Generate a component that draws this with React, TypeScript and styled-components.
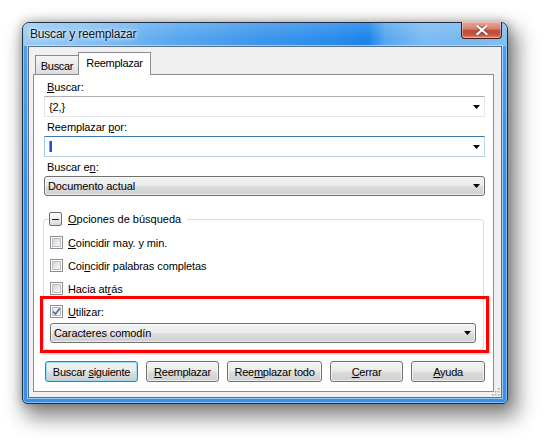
import React from "react";
import styled, { createGlobalStyle } from "styled-components";

const Global = createGlobalStyle`
  html, body { margin: 0; padding: 0; background: #ffffff; }
  body {
    font-family: "Liberation Sans", Arial, sans-serif;
    font-size: 11px;
    letter-spacing: -0.1px;
    color: #000;
  }
  * { box-sizing: border-box; }
`;

const Stage = styled.div`
  width: 550px;
  height: 447px;
  padding: 22px 0 0 22px;
`;

const Window = styled.div`
  position: relative;
  width: 486px;
  height: 382px;
  border: 1px solid #1d3044;
  border-radius: 7px 7px 5px 5px;
  background: linear-gradient(180deg, #4fa2ee 0%, #3a92e8 40%, #3990e6 100%);
  box-shadow:
    inset 0 0 0 1px rgba(200, 230, 255, 0.55),
    6px 10px 20px 4px rgba(0, 0, 0, 0.45),
    0 0 10px 1px rgba(0, 0, 0, 0.22);
  display: flex;
  flex-direction: column;
`;

const TitleBar = styled.div`
  height: 23px;
  flex: none;
  display: flex;
  align-items: flex-start;
  justify-content: space-between;
  border-radius: 6px 6px 0 0;
  background:
    linear-gradient(180deg, rgba(255, 255, 255, 0.15) 0%, rgba(255, 255, 255, 0) 70%),
    linear-gradient(
      90deg,
      #9ccbf4 0px,
      #84bff2 70px,
      #5ba8ef 150px,
      #3c96ec 240px,
      #2a8ceb 310px,
      #1b84ea 345px,
      #56a7ef 362px,
      #7cbbf2 400px,
      #77b7f1 450px,
      #83bff2 484px
    );
`;

const Title = styled.div`
  padding-left: 7px;
  line-height: 23px;
  font-size: 12px;
  letter-spacing: -0.2px;
  color: #0c1620;
  text-shadow: 0 0 6px rgba(255, 255, 255, 0.95), 0 0 3px rgba(255, 255, 255, 0.9);
`;

const CloseButton = styled.div`
  width: 41px;
  height: 17px;
  margin: -1px 5px 0 0;
  border: 1px solid #4b1a14;
  border-top: none;
  border-radius: 0 0 4px 4px;
  background: linear-gradient(
    180deg,
    #e6a497 0%,
    #d88575 40%,
    #c24a35 55%,
    #c45540 80%,
    #dd8e78 100%
  );
  box-shadow: inset 0 0 0 1px rgba(255, 220, 210, 0.45);
  display: flex;
  align-items: center;
  justify-content: center;
`;

const Client = styled.div`
  position: relative;
  flex: 1;
  margin: 0 5px 5px 5px;
  border: 1px solid #5a7089;
  box-shadow: 0 0 0 1px rgba(220, 238, 255, 0.6);
  background: #f0f0f0;
  padding: 5px 7px 5px 4px;
  display: flex;
  flex-direction: column;
`;

const TabStrip = styled.div`
  display: flex;
  align-items: flex-end;
  height: 23px;
  padding-left: 2px;
  margin-bottom: -1px;
  position: relative;
  z-index: 1;
`;

const Tab = styled.div<{ $active?: boolean; $w: number }>`
  width: ${(p) => p.$w}px;
  height: ${(p) => (p.$active ? 23 : 19)}px;
  margin-bottom: ${(p) => (p.$active ? 0 : 1)}px;
  margin-left: ${(p) => (p.$active ? -1 : 0)}px;
  border: 1px solid #898c95;
  border-bottom: none;
  background: ${(p) =>
    p.$active ? "#ffffff" : "linear-gradient(180deg, #f4f4f4 0%, #e9e9e9 50%, #dcdcdc 100%)"};
  display: flex;
  align-items: center;
  justify-content: center;
  padding: ${(p) => (p.$active ? "0 0 3px" : "2px 0 0")};
  letter-spacing: -0.3px;
`;

const Panel = styled.div`
  position: relative;
  flex: 1;
  border: 1px solid #898c95;
  background: #ffffff;
  padding: 5px 8px 0 10px;
  display: flex;
  flex-direction: column;
`;

const Label = styled.div<{ $gap?: number }>`
  height: 14px;
  line-height: 14px;
  margin-top: ${(p) => p.$gap ?? 0}px;
  margin-bottom: 2px;
  padding-left: 3px;
`;

const Key = styled.span`
  text-decoration: underline;
  text-underline-offset: 1px;
`;

const Combo = styled.div<{ $focused?: boolean }>`
  height: 21px;
  border: 1px solid;
  border-color: ${(p) =>
    p.$focused ? "#3d7bad #b7d9ed #b5cfe7 #a4c9e3" : "#abadb3 #e3e9ef #e3e9ef #e2e3ea"};
  background: #ffffff;
  display: flex;
  align-items: center;
  justify-content: space-between;
  padding: 0 4px 0 4px;
`;

const Caret = styled.span`
  width: 3px;
  height: 11px;
  background: linear-gradient(90deg, #e98a2c 0 1px, #1b52c4 1px 3px);
`;

const Select = styled.div<{ $inset?: number }>`
  height: 20px;
  border: 1px solid #707070;
  border-radius: 3px;
  margin-left: ${(p) => p.$inset ?? 0}px;
  background: linear-gradient(180deg, #f3f3f3 0%, #ebebeb 48%, #dddddd 52%, #cfcfcf 100%);
  box-shadow: inset 0 0 0 1px rgba(255, 255, 255, 0.6);
  display: flex;
  align-items: center;
  justify-content: space-between;
  padding: 0 4px 0 3px;
`;

const Group = styled.fieldset`
  margin: 16px 1px 0 -1px;
  border: 1px solid #d5dfe5;
  border-radius: 3px;
  padding: 5px 7px 6px 5px;
  min-width: 0;
`;

const Legend = styled.legend`
  padding: 0 6px 0 0;
  height: 14px;
  display: flex;
  align-items: center;
  gap: 6px;
  line-height: 14px;
  letter-spacing: 0;
`;

const Toggle = styled.span`
  width: 13px;
  height: 14px;
  border: 1px solid #6e6e6e;
  border-radius: 2px;
  background: linear-gradient(180deg, #ffffff 0%, #f0f0f0 45%, #d9d9d9 100%);
  display: flex;
  align-items: center;
  justify-content: center;
  &::after {
    content: "";
    width: 7px;
    height: 1px;
    background: #1e1e1e;
  }
`;

const Row = styled.div`
  height: 23px;
  display: flex;
  align-items: center;
  gap: 5px;
  padding-left: 1px;
`;

const Box = styled.span<{ $checked?: boolean }>`
  position: relative;
  width: 13px;
  height: 13px;
  flex: none;
  border: 1px solid #8e8f8f;
  background: #ffffff;
  &::before {
    content: "";
    position: absolute;
    inset: 1px;
    border: 1px solid #b9bdc3;
    background: ${(p) =>
      p.$checked
        ? "linear-gradient(135deg, #e6e8ec 0%, #f7f8f9 100%)"
        : "linear-gradient(135deg, #cdd1d6 0%, #e9ebee 60%, #f7f7f7 100%)"};
  }
  svg {
    position: absolute;
    left: 1px;
    top: 1px;
  }
`;

const Buttons = styled.div`
  display: flex;
  gap: 8px;
  margin: 11px 0 0 1px;
`;

const Button = styled.div<{ $w: number; $default?: boolean }>`
  width: ${(p) => p.$w}px;
  height: 21px;
  border: 1px solid ${(p) => (p.$default ? "#3c7fb1" : "#707070")};
  border-radius: 3px;
  background: linear-gradient(180deg, #f2f2f2 0%, #ebebeb 48%, #dddddd 52%, #cfcfcf 100%);
  box-shadow: inset 0 0 0 1px ${(p) => (p.$default ? "#9cdcfa" : "rgba(255,255,255,0.65)")};
  display: flex;
  align-items: center;
  justify-content: center;
  letter-spacing: -0.25px;
  white-space: pre;
`;

const Highlight = styled.div`
  position: absolute;
  left: 6px;
  top: 221px;
  width: 449px;
  height: 57px;
  border: 3px solid #ff0000;
  box-shadow: 1px 1px 2px rgba(0, 0, 0, 0.25);
  pointer-events: none;
`;

const Grip = styled.svg`
  position: absolute;
  right: 1px;
  bottom: 1px;
`;

const Arrow = () => (
  <svg width="7" height="4" viewBox="0 0 7 4">
    <polygon points="0,0 7,0 3.5,4" fill="#000" />
  </svg>
);

const Check = () => (
  <svg width="9" height="9" viewBox="0 0 9 9">
    <path d="M1.2 4.6 L3.4 7 L7.8 1.4" fill="none" stroke="#5469a6" strokeWidth="1.6" />
  </svg>
);

const CloseIcon = () => (
  <svg width="12" height="10" viewBox="0 0 12 10">
    <path
      d="M1.5 1 L10.5 9 M10.5 1 L1.5 9"
      stroke="#3a1410"
      strokeWidth="3.6"
      strokeLinecap="square"
      opacity="0.55"
    />
    <path d="M1.5 1 L10.5 9 M10.5 1 L1.5 9" stroke="#ffffff" strokeWidth="2.2" strokeLinecap="square" />
  </svg>
);

const options: { pre: string; key: string; post: string; checked?: boolean }[] = [
  { pre: "", key: "C", post: "oincidir may. y min." },
  { pre: "Coi", key: "n", post: "cidir palabras completas" },
  { pre: "Hacia at", key: "r", post: "ás" },
  { pre: "", key: "U", post: "tilizar:", checked: true },
];

const buttons: { pre: string; key: string; post: string; w: number; def?: boolean }[] = [
  { pre: "Buscar ", key: "s", post: "iguiente", w: 93, def: true },
  { pre: "", key: "R", post: "eemplazar", w: 73 },
  { pre: "Ree", key: "m", post: "plazar todo", w: 95 },
  { pre: "", key: "C", post: "errar", w: 73 },
  { pre: "", key: "A", post: "yuda", w: 74 },
];

export default function App() {
  return (
    <>
      <Global />
      <Stage>
        <Window>
          <TitleBar>
            <Title>Buscar y reemplazar</Title>
            <CloseButton>
              <CloseIcon />
            </CloseButton>
          </TitleBar>
          <Client>
            <TabStrip>
              <Tab $w={44}>Buscar</Tab>
              <Tab $w={73} $active>
                Reemplazar
              </Tab>
            </TabStrip>
            <Panel>
              <Label>
                <Key>B</Key>uscar:
              </Label>
              <Combo>
                <span>{"{2,}"}</span>
                <Arrow />
              </Combo>
              <Label $gap={3}>
                Reemplazar <Key>p</Key>or:
              </Label>
              <Combo $focused>
                <Caret />
                <Arrow />
              </Combo>
              <Label $gap={3}>
                Buscar e<Key>n</Key>:
              </Label>
              <Select>
                <span>Documento actual</span>
                <Arrow />
              </Select>
              <Group>
                <Legend>
                  <Toggle />
                  <span>
                    <Key>O</Key>pciones de búsqueda
                  </span>
                </Legend>
                {options.map((o) => (
                  <Row key={o.post}>
                    <Box $checked={o.checked}>{o.checked && <Check />}</Box>
                    <span>
                      {o.pre}
                      <Key>{o.key}</Key>
                      {o.post}
                    </span>
                  </Row>
                ))}
                <Select $inset={1}>
                  <span>Caracteres comodín</span>
                  <Arrow />
                </Select>
              </Group>
              <Buttons>
                {buttons.map((b) => (
                  <Button key={b.post} $w={b.w} $default={b.def}>
                    <span>
                      {b.pre}
                      <Key>{b.key}</Key>
                      {b.post}
                    </span>
                  </Button>
                ))}
              </Buttons>
              <Highlight />
            </Panel>
            <Grip width="9" height="9" viewBox="0 0 9 9">
              {[
                [7, 1],
                [7, 4],
                [4, 4],
                [7, 7],
                [4, 7],
                [1, 7],
              ].map(([x, y]) => (
                <rect key={`${x}-${y}`} x={x} y={y} width="1.5" height="1.5" fill="#a0a0a0" />
              ))}
            </Grip>
          </Client>
        </Window>
      </Stage>
    </>
  );
}
